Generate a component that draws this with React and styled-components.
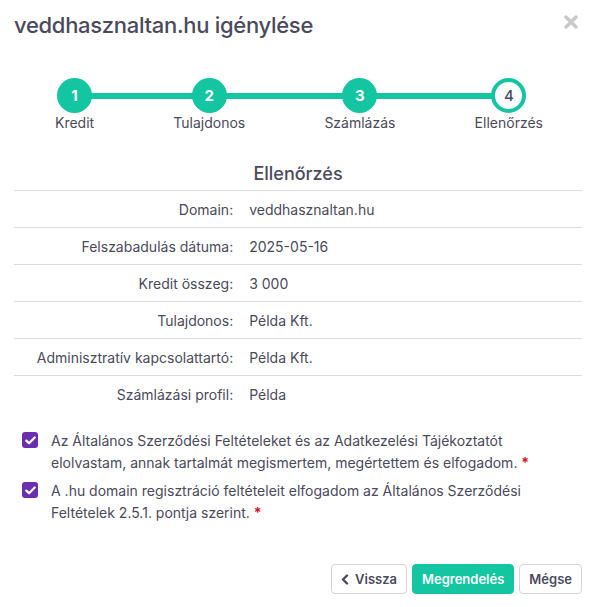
import React, { useState } from 'react';
import styled, { createGlobalStyle } from 'styled-components';

const GlobalStyle = createGlobalStyle`
  html, body {
    margin: 0;
    padding: 0;
    background: #ffffff;
  }
  body {
    font-family: Inter, "Noto Sans", "Liberation Sans", sans-serif;
    color: #4b4a5c;
  }
`;

const Modal = styled.div`
  width: 596px;
  height: 607px;
  box-sizing: border-box;
  padding: 0 14px;
  display: flex;
  flex-direction: column;
`;

const Header = styled.div`
  display: flex;
  align-items: center;
  justify-content: space-between;
  height: 50px;
`;

const Title = styled.h2`
  margin: 0;
  font-size: 22px;
  font-weight: 500;
  letter-spacing: -0.3px;
  color: #4b4a5c;
`;

const Close = styled.button`
  border: none;
  background: none;
  padding: 0;
  margin: -6px 4px 0 0;
  cursor: pointer;
  display: flex;
`;

const Stepper = styled.div`
  position: relative;
  display: flex;
  justify-content: space-between;
  margin: 28px 39px 0 41px;
`;

const Track = styled.div`
  position: absolute;
  left: 20px;
  right: 34px;
  top: 15px;
  height: 6px;
  background: #13c5a1;
`;

const Step = styled.div`
  position: relative;
  display: flex;
  flex-direction: column;
  align-items: center;
  gap: 1px;
`;

const Dot = styled.div`
  width: 35px;
  height: 35px;
  box-sizing: border-box;
  border-radius: 50%;
  display: flex;
  align-items: center;
  justify-content: center;
  font-size: 15px;
  font-weight: ${(p) => (p.$active ? 500 : 700)};
  background: ${(p) => (p.$active ? '#ffffff' : '#13c5a1')};
  color: ${(p) => (p.$active ? '#4b4a5c' : '#ffffff')};
  border: ${(p) => (p.$active ? '4px solid #13c5a1' : 'none')};
`;

const StepLabel = styled.div`
  font-size: 14px;
  line-height: 18px;
  color: #4b4a5c;
`;

const SectionTitle = styled.h3`
  margin: 31px 0 0;
  text-align: center;
  font-size: 18px;
  font-weight: 500;
  line-height: 22px;
  color: #4b4a5c;
`;

const Table = styled.table`
  width: 100%;
  border-collapse: collapse;
  margin-top: 5px;
  font-size: 14px;
`;

const Row = styled.tr`
  border-top: 1px solid #dcdcdc;
`;

const Label = styled.td`
  width: 40%;
  text-align: right;
  padding: 0 8px;
  height: 36px;
  color: #4b4a5c;
`;

const Value = styled.td`
  padding: 0 8px;
  color: #4b4a5c;
`;

const Agreements = styled.div`
  display: flex;
  flex-direction: column;
  gap: 6px;
  margin-top: 18px;
  padding: 0 40px 0 8px;
`;

const Check = styled.label`
  display: flex;
  align-items: flex-start;
  gap: 13px;
  font-size: 14px;
  line-height: 22px;
  color: #4b4a5c;
  cursor: pointer;
`;

const Box = styled.span`
  flex: none;
  width: 16px;
  height: 16px;
  margin-top: 2px;
  border-radius: 3px;
  background: ${(p) => (p.$checked ? '#6a2fb0' : '#ffffff')};
  border: ${(p) => (p.$checked ? 'none' : '1px solid #999')};
  display: flex;
  align-items: center;
  justify-content: center;
`;

const Required = styled.span`
  color: #e0121f;
  font-weight: 700;
`;

const Footer = styled.div`
  margin-top: auto;
  margin-bottom: 13px;
  display: flex;
  justify-content: flex-end;
  gap: 5px;
`;

const Button = styled.button`
  height: 30px;
  padding: 0 9px;
  border-radius: 4px;
  font-family: inherit;
  font-size: 13px;
  font-weight: 600;
  display: flex;
  align-items: center;
  gap: 6px;
  cursor: pointer;
  border: 1px solid ${(p) => (p.$primary ? '#13c5a1' : '#d4d4d4')};
  background: ${(p) => (p.$primary ? '#13c5a1' : '#ffffff')};
  color: ${(p) => (p.$primary ? '#ffffff' : '#4b4a5c')};
`;

const steps = ['Kredit', 'Tulajdonos', 'Számlázás', 'Ellenőrzés'];

const rows = [
  ['Domain:', 'veddhasznaltan.hu'],
  ['Felszabadulás dátuma:', '2025-05-16'],
  ['Kredit összeg:', '3 000'],
  ['Tulajdonos:', 'Példa Kft.'],
  ['Adminisztratív kapcsolattartó:', 'Példa Kft.'],
  ['Számlázási profil:', 'Példa'],
];

function Tick() {
  return (
    <svg width="11" height="9" viewBox="0 0 11 9">
      <path d="M1.3 4.6 L4.1 7.3 L9.7 1.5" fill="none" stroke="#fff" strokeWidth="2.2" strokeLinecap="round" strokeLinejoin="round" />
    </svg>
  );
}

export default function App() {
  const [checks, setChecks] = useState([true, true]);

  const toggle = (i) => setChecks((c) => c.map((v, j) => (j === i ? !v : v)));

  return (
    <>
      <GlobalStyle />
      <Modal>
        <Header>
          <Title>veddhasznaltan.hu igénylése</Title>
          <Close aria-label="Bezárás">
            <svg width="14" height="14" viewBox="0 0 14 14">
              <path d="M2 2 L12 12 M12 2 L2 12" stroke="#c9c9c9" strokeWidth="3.4" strokeLinecap="round" />
            </svg>
          </Close>
        </Header>

        <Stepper>
          <Track />
          {steps.map((s, i) => (
            <Step key={s}>
              <Dot $active={i === steps.length - 1}>{i + 1}</Dot>
              <StepLabel>{s}</StepLabel>
            </Step>
          ))}
        </Stepper>

        <SectionTitle>Ellenőrzés</SectionTitle>

        <Table>
          <tbody>
            {rows.map(([k, v]) => (
              <Row key={k}>
                <Label>{k}</Label>
                <Value>{v}</Value>
              </Row>
            ))}
          </tbody>
        </Table>

        <Agreements>
          <Check onClick={() => toggle(0)}>
            <Box $checked={checks[0]}>{checks[0] && <Tick />}</Box>
            <span>
              Az Általános Szerződési Feltételeket és az Adatkezelési Tájékoztatót elolvastam, annak tartalmát megismertem, megértettem és elfogadom. <Required>*</Required>
            </span>
          </Check>
          <Check onClick={() => toggle(1)}>
            <Box $checked={checks[1]}>{checks[1] && <Tick />}</Box>
            <span>
              A .hu domain regisztráció feltételeit elfogadom az Általános Szerződési Feltételek 2.5.1. pontja szerint. <Required>*</Required>
            </span>
          </Check>
        </Agreements>

        <Footer>
          <Button>
            <svg width="8" height="11" viewBox="0 0 8 11">
              <path d="M6 1.5 L2 5.5 L6 9.5" fill="none" stroke="#4b4a5c" strokeWidth="2.4" strokeLinecap="round" strokeLinejoin="round" />
            </svg>
            Vissza
          </Button>
          <Button $primary>Megrendelés</Button>
          <Button>Mégse</Button>
        </Footer>
      </Modal>
    </>
  );
}
